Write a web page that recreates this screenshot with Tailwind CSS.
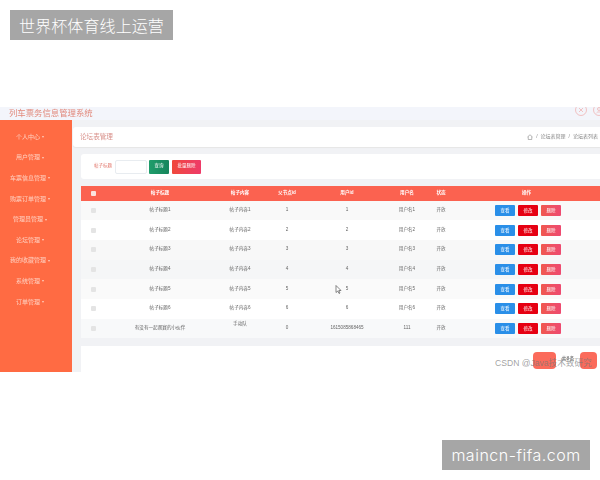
<!DOCTYPE html>
<html lang="zh">
<head>
<meta charset="utf-8">
<title>论坛表管理</title>
<script src="https://cdn.jsdelivr.net/npm/@tailwindcss/browser@4"></script>
</head>
<body class="bg-white">
<div class="relative w-[600px] h-[480px] overflow-hidden bg-white font-['Liberation_Sans','Noto_Sans_CJK_SC',sans-serif]">

    <!-- Captura del sistema -->
    <div class="pt-[107px]">
        <div class="flex flex-col w-[600px] h-[265px] overflow-hidden bg-[#f1f2f5] blur-[0.6px]">

            <!-- Barra superior -->
            <header class="relative flex items-center shrink-0 h-[13px] pl-[9px] bg-[#f3f5fb]">
                <span class="text-[8.4px] leading-none text-[#e2897c]">列车票务信息管理系统</span>
                <svg class="absolute left-[575px] top-[-3px]" width="12" height="12" viewBox="0 0 12 12" fill="none" stroke="#f0b4b4" stroke-width=".8"><circle cx="6" cy="6" r="5.500"/><path d="M4 4l4 4M8 4l-4 4"/></svg>
                <svg class="absolute left-[593px] top-[-3px]" width="12" height="12" viewBox="0 0 12 12" fill="none" stroke="#f0b4b4" stroke-width=".8"><circle cx="6" cy="6" r="5.500"/><circle cx="6" cy="5" r="1.500"/><path d="M3.500 9c.5-1.500 4.500-1.500 5 0"/></svg>
            </header>

            <div class="flex flex-1 min-h-0">
                <!-- Menu lateral -->
                <aside id="menu" class="flex flex-col shrink-0 w-[72px] pt-[7px] bg-[#ff6b43]"></aside>

                <main class="flex-1 min-w-0 pt-[7px] pl-[1px]">
                    <div class="flex items-center justify-between h-[20px] pl-[7px] pr-[2px] bg-white rounded-l-[3px] shadow-[0_1px_1px_#e6e6e6]">
                        <span class="text-[6.6px] text-[#d9928c]">论坛表管理</span>
                        <div class="flex items-center gap-[3px] text-[5px] text-[#888]">
                            <svg width="6" height="6" viewBox="0 0 12 12" fill="none" stroke="#888" stroke-width="1.2"><path d="M1 6l5-4.500 5 4.500M2.500 5v6h7V5"/></svg>
                            <span>/</span>
                            <span>论坛表管理</span>
                            <span>/</span>
                            <span>论坛表列表</span>
                        </div>
                    </div>

                    <div class="ml-[8px] mt-[7px] w-[519px]">
                        <!-- Buscador -->
                        <div class="flex items-center h-[25px] pl-[13px] bg-white rounded-l-[3px]">
                            <span class="w-[21px] text-[4.5px] text-[#e2776c]">帖子标题</span>
                            <span class="w-[32px] h-[14px] bg-white border border-[#e8ecf0] rounded-[2px]"></span>
                            <button class="w-[20px] h-[14px] ml-[2px] rounded-[1px] bg-gradient-to-r from-[#1f9d6b] to-[#17855c] text-[4.5px] text-white">查询</button>
                            <button class="w-[29px] h-[14px] ml-[3px] rounded-[1px] bg-gradient-to-r from-[#f0483a] to-[#ee3a68] text-[4.5px] text-white">批量删除</button>
                        </div>

                        <!-- Tabla -->
                        <table class="table-fixed w-[519px] mt-[7px] border-collapse text-center text-[4.600px] text-[#666]">
                            <colgroup>
                                <col class="w-[24px]"><col class="w-[110px]"><col class="w-[50px]"><col class="w-[44px]">
                                <col class="w-[76px]"><col class="w-[44px]"><col class="w-[24px]"><col class="w-[147px]">
                            </colgroup>
                            <thead>
                                <tr class="h-[14.500px] bg-[#fb6250] text-[4.600px] font-bold text-white">
                                    <th class="font-normal"><span class="block mx-auto w-[5px] h-[5px] rounded-[1px] bg-[#fbe3df]"></span></th>
                                    <th>帖子标题</th>
                                    <th>帖子内容</th>
                                    <th>父节点id</th>
                                    <th>用户id</th>
                                    <th>用户名</th>
                                    <th>状态</th>
                                    <th>操作</th>
                                </tr>
                            </thead>
                            <tbody id="filas"></tbody>
                        </table>
                    </div>

                    <!-- Paginacion -->
                    <div class="flex items-start h-[27px] mt-[8px] ml-[8px] pt-[6px] pl-[452px] bg-white">
                        <span class="w-[23px] h-[17px] rounded-[4px] bg-[#fb6b5b]"></span>
                        <span class="w-[24px] mt-[3px] text-center text-[5px] leading-[6px] text-[#666]">共8条</span>
                        <span class="w-[17px] h-[17px] rounded-[4px] bg-[#fb6b5b]"></span>
                    </div>
                </main>
            </div>
        </div>
    </div>

    <!-- Sobrepuestos -->
    <span class="absolute left-[495px] top-[356px] text-[8.600px] leading-[14px] whitespace-nowrap text-[#777]/70">CSDN @Java技术致研究</span>

    <svg class="absolute left-[335px] top-[285px]" width="7" height="9" viewBox="0 0 7 9" fill="#fff" stroke="#555" stroke-width=".7"><path d="M1 .5v7l1.800-1.500 1.200 2.500 1-.5L3.800 5.500H6z"/></svg>

    <div class="absolute left-[10px] top-[10px] flex items-center justify-center w-[163px] h-[30px] bg-[#a6a6a6] text-[16px] tracking-[0.1px] text-white font-['Noto_Sans_CJK_SC',sans-serif] font-light">世界杯体育线上运营</div>

    <div class="absolute left-[442px] top-[440px] flex items-center justify-center w-[148px] h-[30px] bg-[#a6a6a6] text-[16px] tracking-[0.5px] font-light text-white font-['Inter',sans-serif]">maincn-fifa.com</div>
</div>

<script>
    const menu = ["个人中心", "用户管理", "车票信息管理", "购票订单管理", "管理员管理", "论坛管理", "我的收藏管理", "系统管理", "订单管理"];

    document.getElementById("menu").innerHTML = menu.map(nombre => `
        <div class="flex items-center justify-center h-[20.600px] pr-[12px] text-[6px] text-[#ffd0c0]">
            <span class="whitespace-nowrap">${nombre}</span>
            <span class="ml-[2px] w-0 h-0 border-x-[1.500px] border-t-[2px] border-x-transparent border-t-[#ffd0c0]"></span>
        </div>
    `).join("");

    const colores = ["bg-[#f9f9f9]", "bg-white", "bg-[#f8f8f8]", "bg-[#f5f6f7]", "bg-[#fafafa]", "bg-white", "bg-[#f8f9fa]"];

    const filas = [1, 2, 3, 4, 5, 6].map(n => ({
        titulo: `帖子标题${n}`, contenido: `帖子内容${n}`, padre: n, usuario: n, nombre: `用户名${n}`, arriba: ""
    }));
    filas.push({ titulo: "有没有一起观赛的小伙伴", contenido: "手动队", padre: 0, usuario: "1615085868465", nombre: "111", arriba: "pb-[8px]" });

    document.getElementById("filas").innerHTML = filas.map((f, i) => `
        <tr class="h-[19.700px] ${colores[i]}">
            <td><span class="block mx-auto w-[5px] h-[5px] rounded-[1px] bg-[#e4e4e4]"></span></td>
            <td>${f.titulo}</td>
            <td class="${f.arriba}">${f.contenido}</td>
            <td>${f.padre}</td>
            <td>${f.usuario}</td>
            <td>${f.nombre}</td>
            <td>开放</td>
            <td>
                <div class="flex justify-center gap-[3px] pl-[3px] text-[4.500px] leading-[11px] text-white">
                    <span class="w-[20px] h-[11px] rounded-[1px] bg-[#2a8fe8]">查看</span>
                    <span class="w-[20px] h-[11px] rounded-[1px] bg-[#e60012]">修改</span>
                    <span class="w-[20px] h-[11px] rounded-[1px] bg-gradient-to-r from-[#f0584f] to-[#ee4a70]">删除</span>
                </div>
            </td>
        </tr>
    `).join("");
</script>
</body>
</html>
